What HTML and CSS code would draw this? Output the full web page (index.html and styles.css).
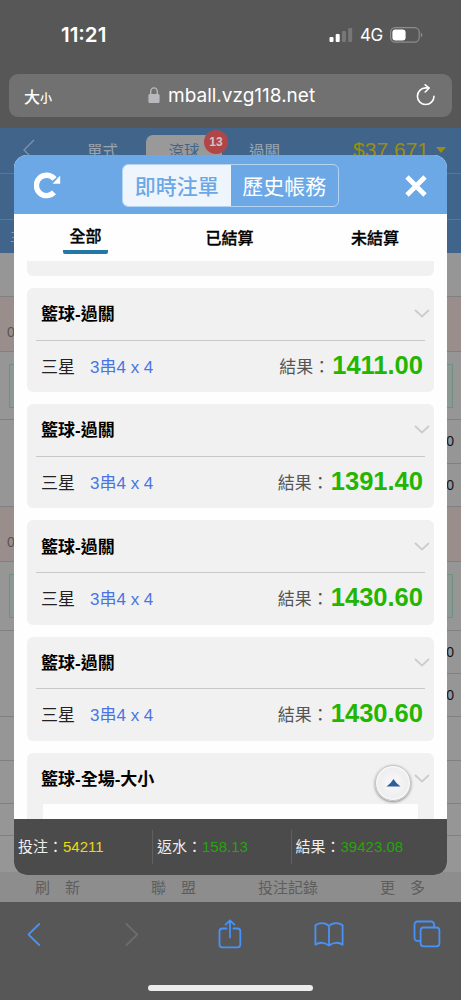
FILE: index.html
```
<!DOCTYPE html>
<html lang="zh-Hant">
<head>
  <meta charset="UTF-8">
  <title>即時注單</title>
  <link rel="stylesheet" href="styles.css">
</head>
<body>
  <div class="phone">
    <!-- Status bar -->
    <div class="status-bar">
      <span class="time">11:21</span>
      <div class="status-icons">
        <svg width="24" height="16" viewBox="0 0 24 16">
          <rect x="0.5" y="10" width="4" height="5" rx="1" fill="#fff"/>
          <rect x="6.7" y="7" width="4" height="8" rx="1" fill="#fff"/>
          <rect x="13" y="4" width="4" height="11" rx="1" fill="#777"/>
          <rect x="19.2" y="1" width="4" height="14" rx="1" fill="#777"/>
        </svg>
        <span class="network">4G</span>
        <svg width="33" height="16" viewBox="0 0 33 16">
          <rect x="0.6" y="0.6" width="28.6" height="14.6" rx="4.6" fill="none" stroke="#8d8d8d" stroke-width="1.2"/>
          <rect x="2.4" y="2.4" width="13.2" height="11" rx="3" fill="#fff"/>
          <path d="M30.8 5.5q1.6 .8 1.6 2.4t-1.6 2.4z" fill="#8d8d8d"/>
        </svg>
      </div>
    </div>

    <div class="address-bar">
      <span class="text-size">大<small>小</small></span>
      <span class="url">
        <svg width="12" height="17" viewBox="0 0 12 17">
          <path d="M2.7 8V4.5a3.3 3.6 0 0 1 6.6 0V8" fill="none" stroke="#b9b9bd" stroke-width="1.4"/>
          <rect x="0.4" y="7" width="11.2" height="9" rx="1.5" fill="#b9b9bd"/>
        </svg>
        mball.vzg118.net
      </span>
      <svg class="reload" width="20" height="24" viewBox="0 0 20 24" fill="none" stroke="#fff" stroke-width="1.6" stroke-linecap="round" stroke-linejoin="round">
        <path d="M18 12.2a8.3 8.3 0 1 1-8.3-8.3h3.4M9.2 .8l4 3.2-4 4"/>
      </svg>
    </div>

    <!-- Page behind the dialog -->
    <div class="page">
      <div class="page-nav">
        <svg width="12" height="22" viewBox="0 0 12 22" fill="none" stroke="#7c93ab" stroke-width="1.3"><path d="M11 1L1 11l10 10"/></svg>
        <span class="nav-item">單式</span>
        <span class="nav-item active">滾球<b class="badge">13</b></span>
        <span class="nav-item">過關</span>
        <span class="balance">$37,671<i class="caret"></i></span>
      </div>
      <div class="page-sub"></div>
      <div class="page-sub-2">主</div>
      <div class="odds">
        <div class="row first"></div>
        <div class="row pink">0</div>
        <div class="row box"><i></i></div>
        <div class="row half split"><span>0</span></div>
        <div class="row half"><span>0</span></div>
        <div class="row pink">0</div>
        <div class="row box"><i></i></div>
        <div class="row half split"><span>0</span></div>
        <div class="row half"><span>0</span></div>
        <div class="row half"></div>
        <div class="row half"></div>
        <div class="row last"></div>
      </div>
      <div class="page-menu">
        <span class="wide">刷新</span>
        <span class="wide">聯盟</span>
        <span>投注記錄</span>
        <span class="wide">更多</span>
      </div>

      <div class="dialog">
        <div class="dialog-head">
          <svg width="28" height="28" viewBox="0 0 28 28">
            <path d="M20 20.4A10.200 10.200 0 1 1 20.5 7" fill="none" stroke="#fff" stroke-width="5.4"/>
            <path d="M26.2 3.600v8.200h-7.600z" fill="#fff"/>
          </svg>
          <div class="switch">
            <span class="on">即時注單</span>
            <span>歷史帳務</span>
          </div>
          <svg width="22" height="22" viewBox="0 0 22 22" stroke="#fff" stroke-width="4.8">
            <path d="M2 2l18 18M20 2L2 20"/>
          </svg>
        </div>
        <div class="tabs">
          <span class="tab active">全部</span>
          <span class="tab">已結算</span>
          <span class="tab">未結算</span>
        </div>

        <div class="list">
          <div class="card cut"></div>
          <div class="card">
            <div class="card-head">籃球-過關<svg class="chevron" viewBox="0 0 16 9"><path d="M1 1l7 6.5L15 1"/></svg></div>
            <div class="card-body"><span>三星</span><span class="combo">3串4 x 4</span><span class="label">結果：</span><b>1411.00</b></div>
          </div>
          <div class="card">
            <div class="card-head">籃球-過關<svg class="chevron" viewBox="0 0 16 9"><path d="M1 1l7 6.5L15 1"/></svg></div>
            <div class="card-body"><span>三星</span><span class="combo">3串4 x 4</span><span class="label">結果：</span><b>1391.40</b></div>
          </div>
          <div class="card">
            <div class="card-head">籃球-過關<svg class="chevron" viewBox="0 0 16 9"><path d="M1 1l7 6.5L15 1"/></svg></div>
            <div class="card-body"><span>三星</span><span class="combo">3串4 x 4</span><span class="label">結果：</span><b>1430.60</b></div>
          </div>
          <div class="card">
            <div class="card-head">籃球-過關<svg class="chevron" viewBox="0 0 16 9"><path d="M1 1l7 6.5L15 1"/></svg></div>
            <div class="card-body"><span>三星</span><span class="combo">3串4 x 4</span><span class="label">結果：</span><b>1430.60</b></div>
          </div>
          <div class="card open">
            <div class="card-head">籃球-全場-大小<svg class="chevron" viewBox="0 0 16 9"><path d="M1 1l7 6.5L15 1"/></svg></div>
            <div class="detail"></div>
          </div>
        </div>

        <div class="to-top"><svg width="15" height="8" viewBox="0 0 14 8"><path d="M0 7.5Q4 5 7 0q3 5 7 7.5z" fill="#2d5f9e"/></svg></div>

        <div class="totals">
          <div>投注：<span class="yellow">54211</span></div>
          <div>返水：<span class="green">158.13</span></div>
          <div>結果：<span class="green">39423.08</span></div>
        </div>
      </div>
    </div>

    <!-- Browser toolbar -->
    <div class="toolbar">
      <svg width="14" height="30" viewBox="0 0 14 30"><path d="M12.2 5L1.5 15.5 12.2 26"/></svg>
      <svg class="off" width="14" height="30" viewBox="0 0 14 30"><path d="M1.5 5l10.7 10.5L1.5 26"/></svg>
      <svg width="24" height="30" viewBox="0 0 24 30"><path d="M8.5 9.5H4.2a2.7 2.7 0 0 0-2.7 2.7v13.4a2.7 2.7 0 0 0 2.7 2.7h15.4a2.7 2.7 0 0 0 2.7-2.7V12.2a2.7 2.7 0 0 0-2.7-2.7H15.4M12 18.5V1.5M7.6 5.7L12 1.3l4.4 4.4"/></svg>
      <svg width="30" height="30" viewBox="0 0 30 30"><path d="M15 7C11 2.8 5 3.6 1.4 6.2v19.5c4-3 10-2.4 13.6.9 3.6-3.3 9.6-3.9 13.6-.9V6.2C25 3.6 19 2.8 15 7v19.6"/></svg>
      <svg width="28" height="30" viewBox="0 0 28 30"><path d="M7.5 21.9H4.5a3 3 0 0 1-3-3V5.5a3 3 0 0 1 3-3h13.6a3 3 0 0 1 3 3v2.9"/><rect x="7.6" y="8.5" width="18.8" height="18.8" rx="3"/></svg>
    </div>
    <div class="home-indicator"></div>
  </div>
</body>
</html>
```

FILE: styles.css
```
* {
  box-sizing: border-box;
}
body {
  margin: 0;
  font-family: "Liberation Sans", "Noto Sans CJK TC", sans-serif;
}
svg {
  display: block;
  flex: none;
}
.phone {
  width: 461px;
  height: 1000px;
  background: #575757;
  display: flex;
  flex-direction: column;
  overflow: hidden;
}

/* status and address bars */
.status-bar {
  height: 74px;
  padding: 0 38px 5px 61px;
  display: flex;
  align-items: center;
  justify-content: space-between;
  color: #fff;
}
.time {
  font: 600 20.5px "Inter", sans-serif;
}
.status-icons {
  display: flex;
  align-items: center;
  gap: 7px;
}
.network {
  font: 400 17px "Inter", sans-serif;
  letter-spacing: -0.3px;
}
.address-bar {
  height: 43px;
  margin: 0 9px 11px;
  padding: 0 16px 0 15px;
  border-radius: 9px;
  background: #717171;
  color: #fff;
  display: flex;
  align-items: center;
  justify-content: space-between;
}
.text-size {
  font: 500 16px "Noto Sans CJK TC", sans-serif;
  width: 46px;
}
.text-size small {
  font-size: 12px;
}
.url {
  font: 400 19px "Inter", sans-serif;
  display: flex;
  align-items: center;
  gap: 8px;
  margin-left: 78px;
  margin-right: auto;
}

/* dimmed page */
.page {
  height: 774px;
  position: relative;
  display: flex;
  flex-direction: column;
  background: #969696;
}
.page-nav {
  height: 46px;
  padding: 7px 15px 0 23px;
  background: #41658a;
  border-bottom: 1px solid #5a7794;
  display: flex;
  align-items: flex-start;
  color: #9aa5b1;
}
.page-nav svg {
  margin: 4px 41px 0 0;
}
.nav-item {
  width: 85px;
  height: 39px;
  line-height: 33px;
  font-size: 15.5px;
  text-align: center;
}
.nav-item:first-of-type {
  width: 53px;
  margin-right: 17px;
}
.nav-item.active {
  position: relative;
  width: 76px;
  background: #999;
  color: #41658a;
  border-radius: 7px 7px 0 0;
}
.badge {
  position: absolute;
  right: -6px;
  top: -5px;
  width: 24px;
  height: 24px;
  border-radius: 50%;
  background: #b14649;
  color: #d2c5c6;
  font-size: 12px;
  line-height: 24px;
}
.balance {
  margin-left: auto;
  color: #9c8d12;
  font-size: 21px;
  line-height: 29px;
  display: flex;
  align-items: center;
  gap: 7px;
}
.caret {
  border: 5px solid transparent;
  border-top: 6px solid #9c8d12;
  border-bottom: 0;
}
.page-sub {
  height: 46px;
  background: #41658a;
  border-bottom: 1px solid #5a7794;
}
.page-sub-2 {
  height: 33px;
  background: #41658a;
  color: #8798a9;
  font-size: 14px;
  line-height: 32px;
  padding-left: 10px;
}
.odds {
  flex: 1;
  font-size: 14px;
}
.row {
  height: 43.4px;
  border-bottom: 1px solid #808080;
}
.first {
  height: 44px;
}
.pink {
  height: 55px;
  line-height: 70px;
  padding-left: 7px;
  background: #9a8e8d;
  color: #555;
}
.box {
  height: 68.4px;
  padding: 12px 8px 12px 9px;
}
.box i {
  display: block;
  height: 44px;
  border: 1px solid #729080;
  background: #8b9893;
}
.half {
  text-align: right;
  padding-right: 7px;
  line-height: 43px;
  color: #151515;
}
.split {
  border-bottom: 0;
  background: linear-gradient(#808080, #808080) right bottom / 50% 1px no-repeat;
}
.last {
  height: 32px;
}
.page-menu {
  height: 30px;
  padding-left: 35px;
  display: flex;
  background: #8d8d8d;
  color: #5d5d5d;
  font-size: 15px;
  line-height: 31px;
  white-space: nowrap;
}
.page-menu span {
  flex: none;
  width: 122px;
}
.page-menu .wide {
  width: 107px;
  letter-spacing: 15px;
}
.page-menu .wide:first-child {
  width: 116px;
}
.page-menu .wide:last-child {
  width: auto;
}

/* bet list dialog */
.dialog {
  position: absolute;
  left: 14px;
  top: 27px;
  width: 433px;
  height: 720px;
  border-radius: 13px;
  background: #fefefe;
  overflow: hidden;
  display: flex;
  flex-direction: column;
}
.dialog-head {
  height: 59px;
  padding: 2px 20px 0;
  background: #6ca8e6;
  display: flex;
  align-items: center;
  justify-content: space-between;
}
.switch {
  width: 217px;
  height: 43px;
  margin-right: 6px;
  border: 1px solid #b5d3f3;
  border-radius: 6px;
  overflow: hidden;
  display: flex;
  color: #fff;
  font-size: 21px;
  line-height: 43px;
  text-align: center;
}
.switch span {
  flex: 1;
}
.switch .on {
  background: #eff5fd;
  color: #6ca8e6;
  font-weight: 500;
}
.tabs {
  height: 47px;
  padding: 4px 48px 0 49px;
  display: flex;
  justify-content: space-between;
}
.tab {
  font: 500 16px/38px "Noto Sans CJK TC", sans-serif;
  -webkit-text-stroke: 0.3px #000;
}
.tab.active {
  height: 36px;
  padding: 0 6.5px;
  line-height: 34px;
  border-bottom: 4px solid #2478a8;
  border-radius: 2px;
}
.list {
  flex: 1;
  min-height: 0;
  overflow: hidden;
  padding: 0 13px;
  display: flex;
  flex-direction: column;
  gap: 12px;
}
.card {
  flex: none;
  height: 104.2px;
  padding: 0 9px;
  border-radius: 6px;
  background: #f1f1f1;
}
.card.cut {
  height: 15px;
  border-radius: 0 0 6px 6px;
}
.card-head {
  height: 52.6px;
  padding: 0 4px 2px 5px;
  display: flex;
  align-items: center;
  justify-content: space-between;
  border-bottom: 1px solid #c8c8c8;
  font-size: 17px;
  font-weight: 700;
}
.chevron {
  width: 16px;
  height: 9px;
  margin: 2px -9px 0 0;
  fill: none;
  stroke: #ccc;
  stroke-width: 1.8;
}
.card-body {
  height: 49px;
  padding: 0 2px 0 5px;
  display: flex;
  align-items: center;
  font-size: 17px;
  color: #222;
}
.combo {
  margin-left: 15px;
  color: #4a74e4;
}
.label {
  margin-left: auto;
  margin-right: 2px;
  color: #555;
}
.card-body b {
  color: #22b600;
  font-size: 25.5px;
}
.open .card-head {
  border-bottom: 0;
  height: 51px;
}
.detail {
  height: 60px;
  margin: 0 7px;
  background: #fefefe;
}
.to-top {
  position: absolute;
  left: 361px;
  top: 610px;
  width: 36px;
  height: 36px;
  border-radius: 50%;
  border: 1px solid #c4c4c4;
  background: radial-gradient(#fafafb, #e6e6e9);
  box-shadow: 0 1px 3px rgba(0, 0, 0, 0.45), inset 0 0 2px 1px #fff;
  display: flex;
  align-items: center;
  justify-content: center;
}
.totals {
  height: 56px;
  padding: 11px 0 11px 4px;
  background: #4b4b4b;
  color: #eee;
  font-size: 15px;
  line-height: 34px;
  display: flex;
}
.totals div {
  width: 138.5px;
  padding-left: 4px;
  border-left: 1px solid #606060;
}
.totals div:first-child {
  width: 134px;
  padding-left: 0;
  border-left: 0;
}
.yellow {
  color: #ecda09;
}
.green {
  color: #25a509;
}

/* browser toolbar */
.toolbar {
  height: 62px;
  padding-top: 2px;
  margin: 0 -15px;
  display: grid;
  grid-template-columns: repeat(5, 98.2px);
  align-items: center;
  justify-items: center;
}
.toolbar svg {
  fill: none;
  stroke: #4792fa;
  stroke-width: 1.8;
  stroke-linejoin: round;
  stroke-linecap: round;
}
.toolbar .off {
  stroke: #6d6d6d;
}
.home-indicator {
  width: 165px;
  height: 6px;
  margin: 21px auto 0;
  border-radius: 3px;
  background: #ececec;
}
```
